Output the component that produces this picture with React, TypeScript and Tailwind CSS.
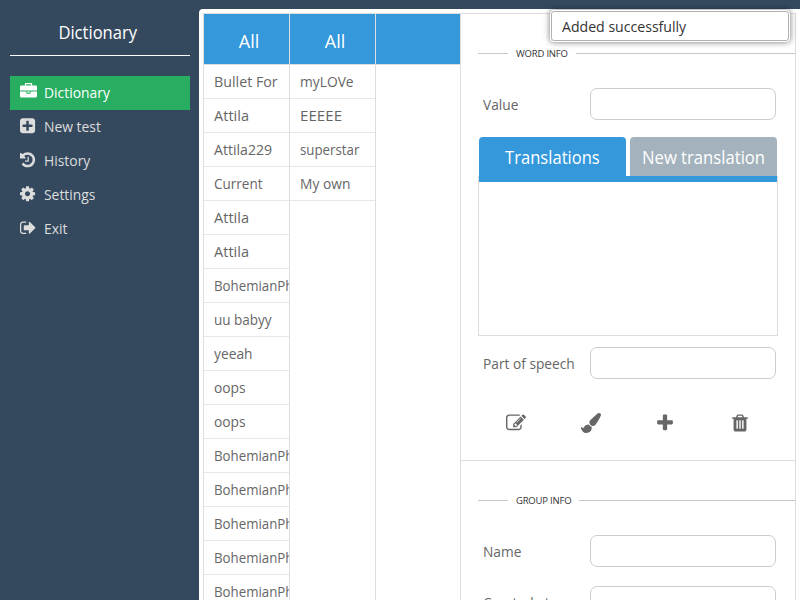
import React from 'react';

const PATHS = {
  briefcase:
    'M640 256h512v-128h-512v128zm1152 640v480q0 66-47 113t-113 47h-1472q-66 0-113-47t-47-113v-480h672v160q0 26 19 45t45 19h320q26 0 45-19t19-45v-160h672zm-768 0v128h-256v-128h256zm768-480v384h-1792v-384q0-66 47-113t113-47h352v-160q0-40 28-68t68-28h576q40 0 68 28t28 68v160h352q66 0 113 47t47 113z',
  plusSquare:
    'M1408 960v-128q0-26-19-45t-45-19h-320v-320q0-26-19-45t-45-19h-128q-26 0-45 19t-19 45v320h-320q-26 0-45 19t-19 45v128q0 26 19 45t45 19h320v320q0 26 19 45t45 19h128q26 0 45-19t19-45v-320h320q26 0 45-19t19-45zm256-544v960q0 119-84.5 203.5t-203.5 84.5h-960q-119 0-203.5-84.5t-84.5-203.5v-960q0-119 84.5-203.5t203.5-84.5h960q119 0 203.5 84.5t84.5 203.5z',
  history:
    'M1664 896q0 156-61 298t-164 245-245 164-298 61q-172 0-327-72.5t-264-204.5q-7-10-6.5-22.5t8.5-20.5l137-138q10-9 25-9 16 2 23 12 73 95 179 147t225 52q104 0 198.5-40.5t163.5-109.5 109.5-163.5 40.5-198.5-40.5-198.5-109.5-163.5-163.5-109.5-198.5-40.5q-98 0-188 35.5t-160 101.5l137 138q31 30 14 69-17 40-59 40h-448q-26 0-45-19t-19-45v-448q0-42 40-59 39-17 69 14l130 129q107-101 244.5-156.5t284.5-55.5q156 0 298 61t245 164 164 245 61 298zm-640-288v448q0 14-9 23t-23 9h-320q-14 0-23-9t-9-23v-64q0-14 9-23t23-9h224v-352q0-14 9-23t23-9h64q14 0 23 9t9 23z',
  cog: 'M1152 896q0-106-75-181t-181-75-181 75-75 181 75 181 181 75 181-75 75-181zm512-109v222q0 12-8 23t-20 13l-185 28q-19 54-39 91 35 50 107 138 10 12 10 25t-9 23q-27 37-99 108t-94 71q-12 0-26-9l-138-108q-44 23-91 38-16 136-29 186-7 28-36 28h-222q-14 0-24.5-8.5t-11.5-21.5l-28-184q-49-16-90-37l-141 107q-10 9-25 9-14 0-25-11-126-114-165-168-7-10-7-23 0-12 8-23 15-21 51-66.5t54-70.5q-27-50-41-99l-183-27q-13-2-21-12.5t-8-23.5v-222q0-12 8-23t19-13l186-28q14-46 39-92-40-57-107-138-10-12-10-24 0-10 9-23 26-36 98.5-107.5t94.5-71.5q13 0 26 10l138 107q44-23 91-38 16-136 29-186 7-28 36-28h222q14 0 24.5 8.5t11.5 21.5l28 184q49 16 90 37l142-107q9-9 24-9 13 0 25 10 129 119 165 170 7 8 7 22 0 12-8 23-15 21-51 66.5t-54 70.5q26 50 41 98l183 28q13 2 21 12.5t8 23.5z',
  signOut:
    'M704 1440q0 4 1 20t.5 26.5-3 23.5-10 19.5-20.5 6.5h-320q-119 0-203.5-84.5t-84.5-203.5v-704q0-119 84.5-203.5t203.5-84.5h320q13 0 22.5 9.5t9.5 22.5q0 4 1 20t.5 26.5-3 23.5-10 19.5-20.5 6.5h-320q-66 0-113 47t-47 113v704q0 66 47 113t113 47h312l11.5 1 11.5 3 8 5.5 7 9 2 13.5zm928-544q0 26-19 45l-544 544q-19 19-45 19t-45-19-19-45v-288h-448q-26 0-45-19t-19-45v-384q0-26 19-45t45-19h448v-288q0-26 19-45t45-19 45 19l544 544q19 19 19 45z',
  edit: 'M888 1184l116-116-152-152-116 116v56h96v96h56zm440-720q-16-16-33 1l-350 350q-17 17-1 33t33-1l350-350q17-17 1-33zm80 594v190q0 119-84.5 203.5t-203.5 84.5h-832q-119 0-203.5-84.5t-84.5-203.5v-832q0-119 84.5-203.5t203.5-84.5h832q63 0 117 25 15 7 18 23 3 17-9 29l-49 49q-14 14-32 8-23-6-45-6h-832q-66 0-113 47t-47 113v832q0 66 47 113t113 47h832q66 0 113-47t47-113v-126q0-13 9-22l64-64q15-15 35-7t20 29zm-96-738l288 288-672 672h-288v-288zm444 132l-92 92-288-288 92-92q28-28 68-28t68 28l152 152q28 28 28 68t-28 68z',
  brush:
    'M1615 0q70 0 122 46.5t52 116.5q0 63-45 151-332 629-465 752-97 91-218 91-126 0-216.5-92.5t-90.5-219.5q0-128 92-212l638-579q59-54 131-54zm-909 1034q39 76 106.5 130t150.5 76l1 71q4 213-129.5 347t-348.5 134q-123 0-218-46.5t-152.5-127.5-86.5-183-29-220q7 5 41 30t62 44.5 59 36.5 46 17q41 0 55-37 25-66 57.5-112.5t69.5-76 88-47.5 103-25.5 125-10.5z',
  plus: 'M1600 736v192q0 40-28 68t-68 28h-416v416q0 40-28 68t-68 28h-192q-40 0-68-28t-28-68v-416h-416q-40 0-68-28t-28-68v-192q0-40 28-68t68-28h416v-416q0-40 28-68t68-28h192q40 0 68 28t28 68v416h416q40 0 68 28t28 68z',
  trash:
    'M704 1376v-704q0-14-9-23t-23-9h-64q-14 0-23 9t-9 23v704q0 14 9 23t23 9h64q14 0 23-9t9-23zm256 0v-704q0-14-9-23t-23-9h-64q-14 0-23 9t-9 23v704q0 14 9 23t23 9h64q14 0 23-9t9-23zm256 0v-704q0-14-9-23t-23-9h-64q-14 0-23 9t-9 23v704q0 14 9 23t23 9h64q14 0 23-9t9-23zm-544-992h448l-48-117q-7-9-17-11h-317q-10 2-17 11zm928 32v64q0 14-9 23t-23 9h-96v948q0 83-47 143.5t-113 60.5h-832q-66 0-113-58.5t-47-141.5v-952h-96q-14 0-23-9t-9-23v-64q0-14 9-23t23-9h309l70-167q15-37 54-63t79-26h320q40 0 79 26t54 63l70 167h309q14 0 23 9t9 23z',
};

type IconName = keyof typeof PATHS;

function Icon({ name, className, left = 0 }: { name: IconName; className: string; left?: number }) {
  return (
    <svg viewBox={`${left} 0 1792 1792`} className={className} fill="currentColor" aria-hidden="true">
      <path d={PATHS[name]} />
    </svg>
  );
}

const MENU: { label: string; icon: IconName; left: number; active?: boolean }[] = [
  { label: 'Dictionary', icon: 'briefcase', left: 0, active: true },
  { label: 'New test', icon: 'plusSquare', left: 128 },
  { label: 'History', icon: 'history', left: 128 },
  { label: 'Settings', icon: 'cog', left: 128 },
  { label: 'Exit', icon: 'signOut', left: 64 },
];

const WORDS = [
  'Bullet For', 'Attila', 'Attila229', 'Current', 'Attila', 'Attila', 'BohemianPh', 'uu babyy', 'yeeah',
  'oops', 'oops', 'BohemianPh', 'BohemianPh', 'BohemianPh', 'BohemianPh', 'BohemianPh',
];
const GROUPS = ['myLOVe', 'EEEEE', 'superstar', 'My own'];

// Horizontal scale per entry; anything absent uses the default.
const WIDTHS: Record<string, string> = {
  'Bullet For': 'scale-x-[0.95]',
  Attila: 'scale-x-[0.97]',
  Attila229: 'scale-x-[0.94]',
  Current: 'scale-x-[0.9]',
  BohemianPh: 'scale-x-[0.885]',
  'uu babyy': 'scale-x-[0.9]',
  EEEEE: 'scale-x-[1.01]',
  superstar: 'scale-x-[0.885]',
};

function Column({ title, items }: { title: string; items: string[] }) {
  return (
    <div className="w-[86px] shrink-0 overflow-hidden border-r border-[#ddd] last:w-[85px]">
      <div className="flex h-[51px] items-center justify-center border-b border-[#ddd] bg-[#3498db] pl-[5px] pt-[3px] text-lg text-white">
        {title}
      </div>
      {items.map((item, i) => (
        <div key={i} className="h-[34px] overflow-hidden whitespace-nowrap border-b border-[#e7e7e7] pl-2.5 text-[15px] leading-8">
          <span className={`inline-block origin-left ${WIDTHS[item] ?? 'scale-x-[0.92]'}`}>{item}</span>
        </div>
      ))}
    </div>
  );
}

function Legend({ children }: { children: string }) {
  return (
    <div className="flex h-3 items-center text-[9.5px] text-[#333]">
      <span className="mr-2 h-px w-[30px] bg-[#c8c8c8]" />
      <span className="mr-2 whitespace-nowrap pt-[2px] tracking-[-0.2px]">{children}</span>
      <span className="h-px flex-1 bg-[#c8c8c8]" />
    </div>
  );
}

function Field({ label }: { label: string }) {
  return (
    <label className="flex h-8 items-center pl-[5px] pr-[19px]">
      <span className="w-[107px] whitespace-nowrap text-[15px]">
        <span className="inline-block origin-left scale-x-[0.915]">{label}</span>
      </span>
      <input className="h-8 w-[186px] rounded-[7px] border border-[#ccc] bg-white px-2 outline-none" />
    </label>
  );
}

export default function App() {
  return (
    <div className="relative flex h-[600px] w-[800px] overflow-hidden bg-[#34495e] font-['Open_Sans','Noto_Sans',sans-serif] text-[#666]">
      <nav className="w-[199px] shrink-0 px-2.5 pr-[9px]">
        <h1 className="h-14 border-b border-white pr-[5px] pt-[10px] text-center text-lg leading-[45px] text-white">
          <span className="inline-block scale-x-[0.92]">Dictionary</span>
        </h1>
        <ul className="mt-5">
          {MENU.map((m) => (
            <li key={m.label} className={m.active ? 'flex h-[34px] bg-[#27ae60] pl-2.5 text-white' : 'flex h-[34px] pl-2.5 text-[#ddd]'}>
              <Icon name={m.icon} left={m.left} className={m.active ? 'mr-[7px] mt-[7px] size-[17px]' : 'mr-[6.4px] mt-[7.2px] size-[17.6px]'} />
              <span className="origin-left scale-x-[0.925] text-[15px] leading-8">{m.label}</span>
            </li>
          ))}
        </ul>
      </nav>
      <main className="mt-[9px] h-[591px] flex-1 rounded-tl bg-white pl-1 pt-1">
        <div className="flex h-[587px] w-[593px] overflow-hidden border-l border-t border-[#ddd]">
          <div className="flex h-full">
            <Column title="All" items={WORDS} />
            <Column title="All" items={GROUPS} />
            <Column title="" items={[]} />
          </div>
          <div className="h-full flex-1 border-r border-[#ddd]">
            <section className="h-[447px] border-b border-[#ddd] pl-[17px] pt-[33px]">
              <Legend>WORD INFO</Legend>
              <div className="mt-[29px]"><Field label="Value" /></div>
              <div className="mt-[17px] flex gap-1 pl-px text-lg text-white">
                <div className="h-[39px] w-[147px] rounded-t bg-[#3498db] text-center leading-[41px]">
                  <span className="inline-block scale-x-[0.92]">Translations</span>
                </div>
                <div className="h-[39px] w-[147px] rounded-t bg-[#a3b2bc] text-center leading-[41px]">
                  <span className="inline-block scale-x-[0.925]">New translation</span>
                </div>
              </div>
              <div className="h-[160px] w-[300px] border border-t-0 border-[#ddd]">
                <div className="h-1.5 bg-[#3498db]" />
              </div>
              <div className="mt-[11px]"><Field label="Part of speech" /></div>
              <div className="mt-[34px] grid w-[299px] grid-cols-4 justify-items-center pl-px">
                <Icon name="edit" className="size-5" />
                <Icon name="brush" className="size-5" />
                <Icon name="plus" className="size-5" />
                <Icon name="trash" className="size-5" />
              </div>
            </section>
            <section className="pl-[17px] pt-[33px]">
              <Legend>GROUP INFO</Legend>
              <div className="mt-[29px] flex flex-col gap-[19px]">
                <Field label="Name" />
                <Field label="Created at" />
              </div>
            </section>
          </div>
        </div>
      </main>
      <div className="absolute left-[550px] top-[10px] h-8 w-[240px] rounded border border-white bg-white shadow-[0_0_6px_rgba(0,0,0,0.55)]">
        <div className="h-[30px] rounded-[3px] border border-[#b0b0b0] pl-2.5 text-[15px] leading-[29px] text-[#333]">
          <span className="inline-block origin-left scale-x-[0.94]">Added successfully</span>
        </div>
      </div>
    </div>
  );
}
